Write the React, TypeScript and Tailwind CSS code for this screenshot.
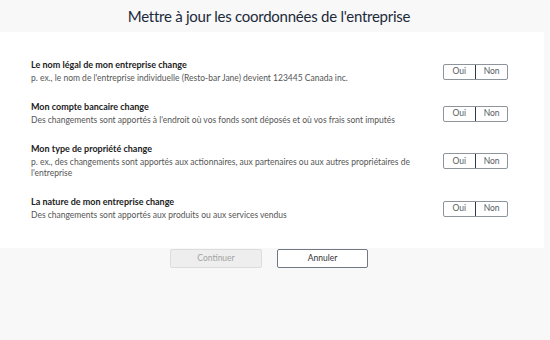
const rows = [
  {
    title: 'Le nom légal de mon entreprise change',
    desc: "p. ex., le nom de l'entreprise individuelle (Resto-bar Jane) devient 123445 Canada inc.",
  },
  {
    title: 'Mon compte bancaire change',
    desc: "Des changements sont apportés à l'endroit où vos fonds sont déposés et où vos frais sont imputés",
  },
  {
    title: 'Mon type de propriété change',
    desc: "p. ex., des changements sont apportés aux actionnaires, aux partenaires ou aux autres propriétaires de l'entreprise",
  },
  {
    title: 'La nature de mon entreprise change',
    desc: 'Des changements sont apportés aux produits ou aux services vendus',
  },
];

function YesNo() {
  return (
    <div className="flex h-4 w-[65px] shrink-0 rounded-[2px] border border-[#8e949b] text-[8.5px] leading-none text-[#555b62]">
      <button className="flex flex-1 items-center justify-center">Oui</button>
      <span className="w-[1.5px] bg-[#2c3a48]" />
      <button className="flex flex-1 items-center justify-center">Non</button>
    </div>
  );
}

export default function App() {
  return (
    <div className="h-[340px] w-[550px] bg-[#f8f8f8] font-['Lato',sans-serif]">
      <h1 className="flex h-8 items-center justify-center pr-[12px] text-[15px] tracking-[-0.25px] text-[#1d2a3a]">
        Mettre à jour les coordonnées de l'entreprise
      </h1>

      <div className="flex w-[544px] flex-col gap-[17px] bg-white pb-[27px] pl-[31px] pr-[36px] pt-[27px]">
        {rows.map((row) => (
          <div key={row.title} className="flex items-center">
            <div className="w-[390px]">
              <div className="text-[9px] font-bold leading-[11px] text-[#222]">{row.title}</div>
              <div className="mt-[3px] text-[8.5px] leading-[11px] text-[#555]">{row.desc}</div>
            </div>
            <div className="ml-auto">
              <YesNo />
            </div>
          </div>
        ))}
      </div>

      <div className="mt-px flex gap-[15px] pl-[170px]">
        <button className="h-[19px] w-[92px] rounded-[2px] border border-[#dcdcdc] bg-[#eeeeee] text-[8.5px] text-[#a3a3a3]">
          Continuer
        </button>
        <button className="h-[19px] w-[91px] rounded-[2px] border border-[#6f7883] bg-white text-[8.5px] text-[#333]">
          Annuler
        </button>
      </div>
    </div>
  );
}
